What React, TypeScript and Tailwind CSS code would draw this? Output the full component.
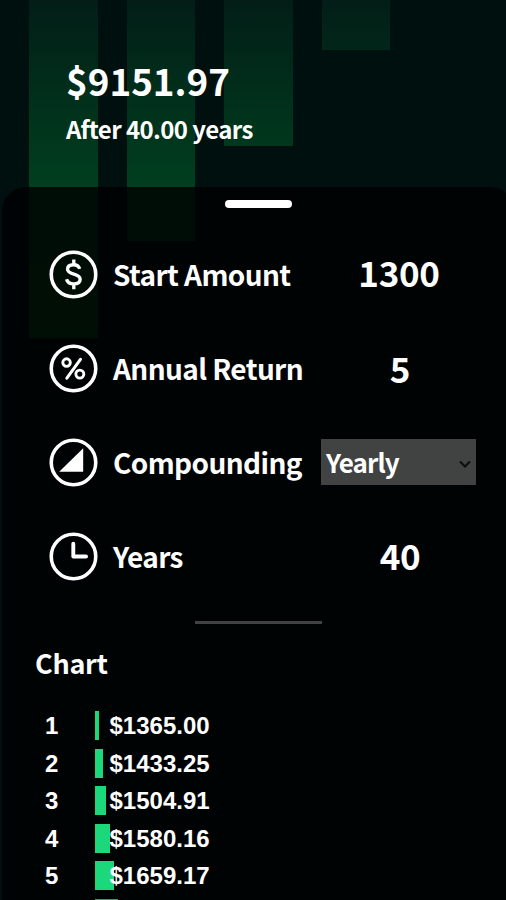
import type { ReactNode } from "react";

const backdropBars = [
  { id: 1, height: 338 },
  { id: 2, height: 241 },
  { id: 3, height: 146 },
  { id: 4, height: 50 },
];

const chartRows = [
  { year: 1, amount: "$1365.00", width: 4 },
  { year: 2, amount: "$1433.25", width: 8 },
  { year: 3, amount: "$1504.91", width: 11 },
  { year: 4, amount: "$1580.16", width: 15 },
  { year: 5, amount: "$1659.17", width: 19 },
];

function CircleIcon({ children }: { children: ReactNode }) {
  return (
    <svg
      className="size-[49px] shrink-0"
      viewBox="0 0 48 48"
      fill="none"
      stroke="white"
      strokeWidth="3.5"
    >
      <circle cx="24" cy="24" r="21.8" />
      {children}
    </svg>
  );
}

function Row({
  icon,
  label,
  children,
}: {
  icon: ReactNode;
  label: string;
  children: ReactNode;
}) {
  return (
    <div className="flex h-[94px] items-center">
      <CircleIcon>{icon}</CircleIcon>
      <span className="-mt-px ml-[15px] w-[208px] text-[28px] leading-none tracking-[-0.6px]">
        {label}
      </span>
      <div className="flex w-[155px] justify-center text-[35px] leading-none tracking-[-0.3px]">
        {children}
      </div>
    </div>
  );
}

function App() {
  return (
    <div className="relative h-[900px] w-[506px] overflow-hidden bg-[#00100f] font-['Noto_Sans_CJK_SC','Noto_Sans',sans-serif] font-bold text-white">
      <div className="absolute inset-0 flex items-start gap-[29px] pl-[29px]">
        {backdropBars.map((bar) => (
          <div
            key={bar.id}
            className="w-[68.5px] bg-[linear-gradient(to_bottom,#021e17_0px,#003f1f_187px,#004a1f_338px)]"
            style={{ height: bar.height }}
          />
        ))}
      </div>

      <div className="relative flex h-full flex-col">
        <header className="h-[187px] shrink-0 pl-[66px] pt-[60px]">
          <h1 className="text-[36.8px] leading-[40px]">$9151.97</h1>
          <p className="mt-4 text-[24px] leading-[26px] tracking-[-0.6px]">
            After 40.00 years
          </p>
        </header>

        <main className="ml-[2px] flex w-[512px] grow flex-col rounded-t-[24px] bg-black/80">
          <div className="ml-[223px] mt-[13px] h-2 w-[67px] shrink-0 rounded-full bg-white" />

          <div className="ml-[47px] mt-[19px]">
            <Row
              label="Start Amount"
              icon={
                <path
                  strokeWidth="3.3"
                  d="M30 18.500c-.8-2.700-2.800-4-6-4-3.600 0-5.800 1.700-5.800 4.300 0 6.100 12.300 3.600 12.300 9.800 0 2.900-2.500 4.600-6.300 4.600s-6.200-1.600-7-4.600M24.300 9.200v5M24.300 33.500v5"
                />
              }
            >
              <span className="-mt-[5px] ml-px">1300</span>
            </Row>
            <Row
              label="Annual Return"
              icon={
                <>
                  <circle cx="17.200" cy="18.200" r="3.700" strokeWidth="2.800" />
                  <circle cx="30.200" cy="29.500" r="3.900" strokeWidth="2.800" />
                  <path
                    strokeWidth="3"
                    strokeLinecap="round"
                    d="M30.800 15 17.500 33.500"
                  />
                </>
              }
            >
              <span className="-mt-[2px] ml-[3px]">5</span>
            </Row>
            <Row
              label="Compounding"
              icon={<path fill="white" stroke="none" d="M33.500 10V33H10z" />}
            >
              <div className="flex h-[46px] w-full items-center justify-between bg-[#414342] px-[5px] text-[26px] tracking-[-0.9px]">
                <span>Yearly</span>
                <svg
                  className="mt-[3px] h-2 w-3"
                  viewBox="0 0 12 8"
                  fill="none"
                  stroke="#0b0d0c"
                  strokeWidth="2"
                >
                  <path d="m1 1.500 5 5 5-5" />
                </svg>
              </div>
            </Row>
            <Row
              label="Years"
              icon={
                <path
                  strokeWidth="3.8"
                  strokeLinecap="round"
                  strokeLinejoin="round"
                  d="M23.800 11.500v12.500h12.500"
                />
              }
            >
              <span className="-mt-[3px] ml-[3px]">40</span>
            </Row>
          </div>

          <div className="ml-[193px] mt-[18px] h-[3px] w-[127px] shrink-0 bg-[#414342]" />

          <h2 className="ml-[33px] mt-[24px] text-[27px] leading-[30px] tracking-[-0.3px]">
            Chart
          </h2>

          <div className="mt-[33px] font-['Liberation_Sans',Arial,sans-serif] text-2xl">
            {chartRows.map((row) => (
              <div key={row.year} className="flex h-[37.5px] items-start">
                <span className="w-[93px] pl-[43px] leading-[29px]">
                  {row.year}
                </span>
                <div className="relative h-[29px]">
                  <div
                    className="h-full bg-[#1bd97b]"
                    style={{ width: row.width }}
                  />
                  <span className="absolute left-[14.500px] top-0 leading-[29px]">
                    {row.amount}
                  </span>
                </div>
              </div>
            ))}
            <div className="ml-[93px] h-[2px] w-[23px] bg-[#1bd97b]/80" />
          </div>
        </main>
      </div>
    </div>
  );
}

export default App;
